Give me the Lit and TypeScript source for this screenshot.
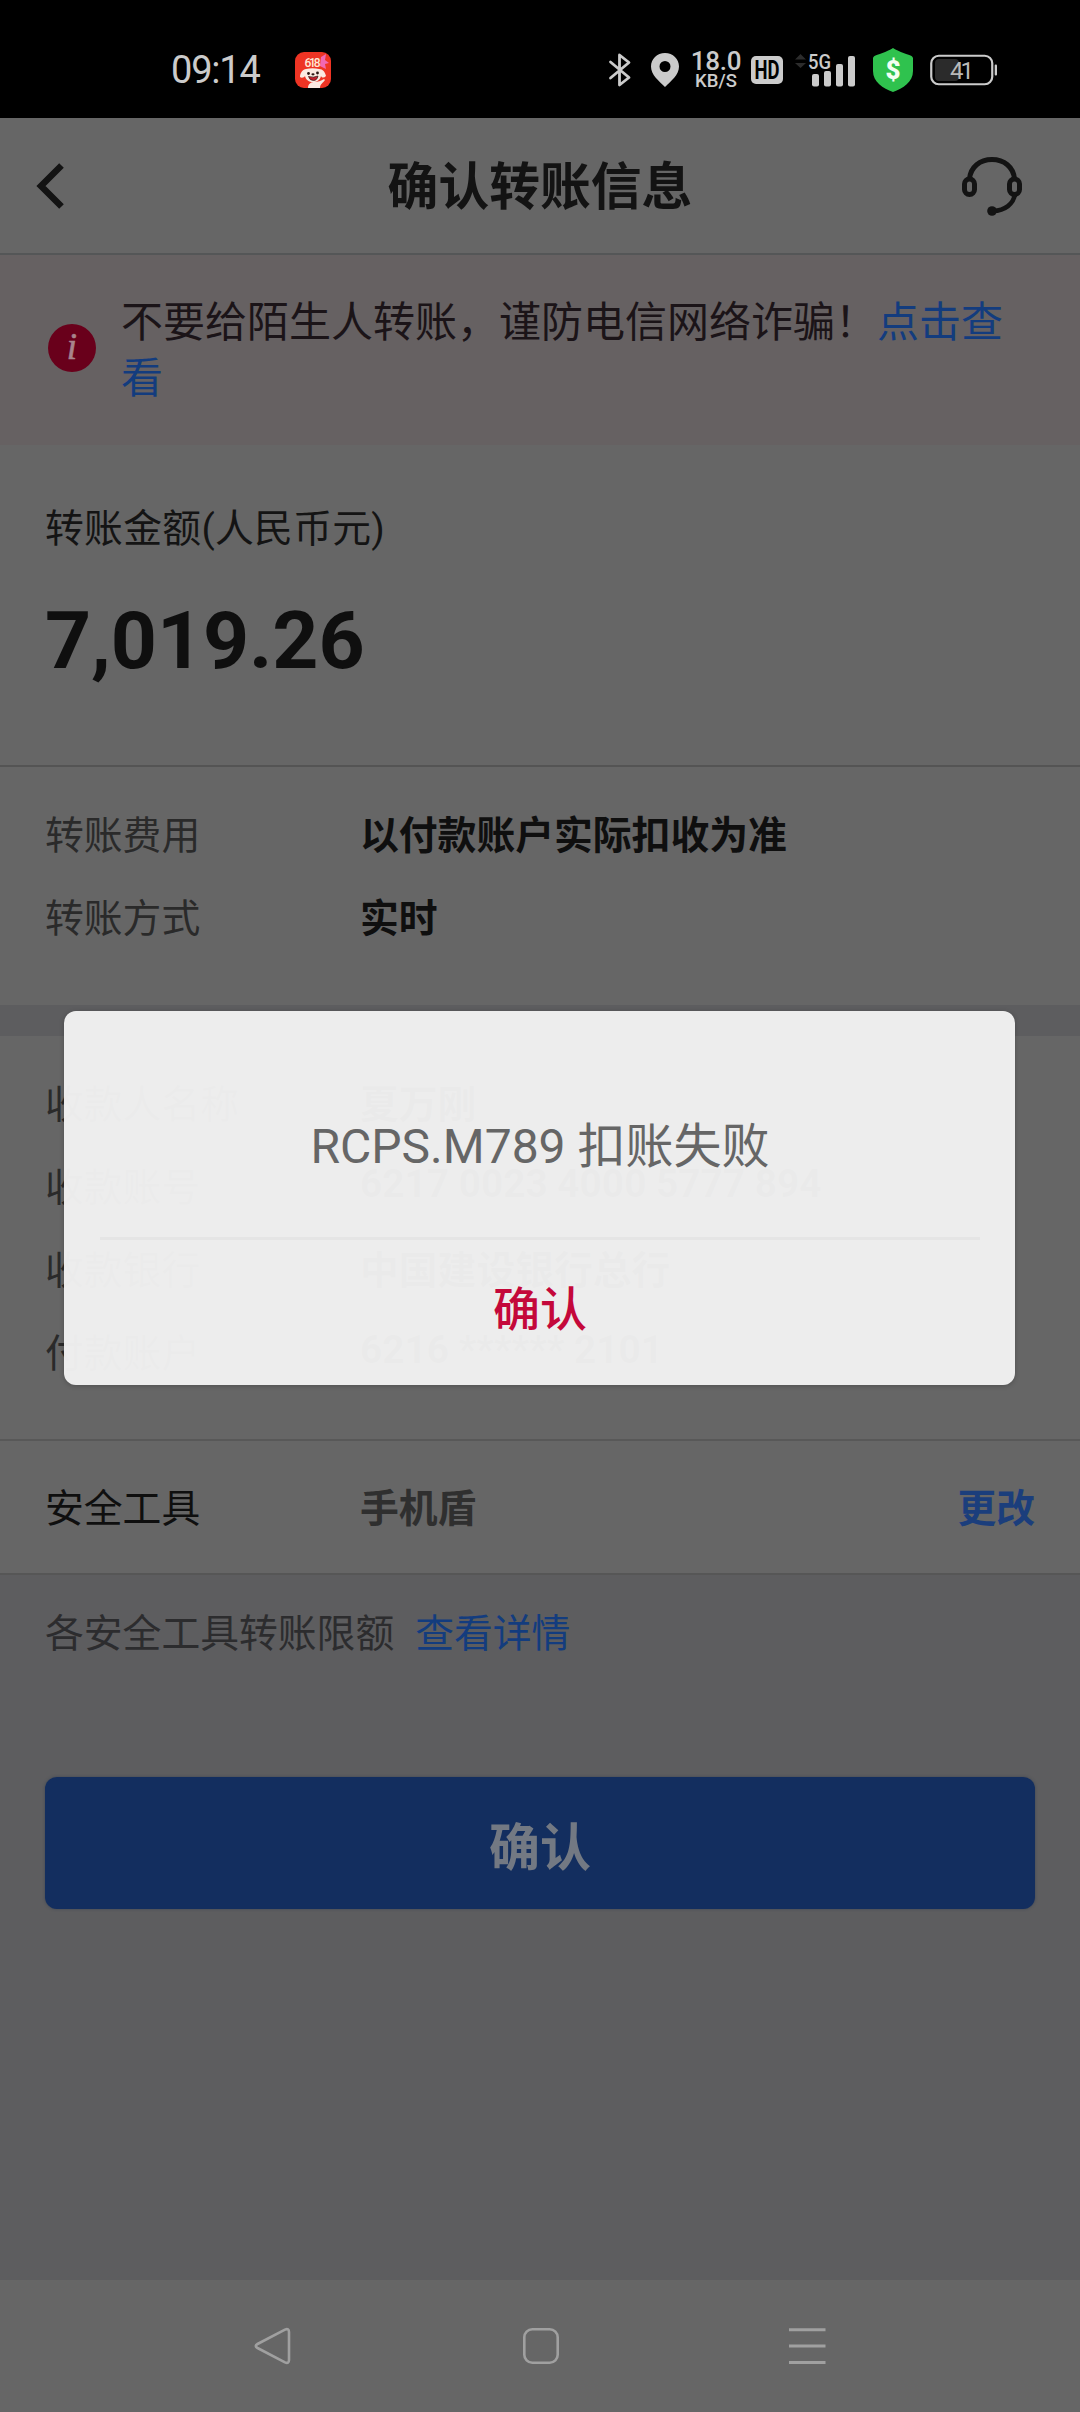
import { LitElement, html, css } from "lit";
import { customElement, property } from "lit/decorators.js";

@customElement("status-bar")
class StatusBar extends LitElement {
  static styles = css`
    :host {
      display: flex;
      align-items: center;
      box-sizing: border-box;
      height: 118px;
      padding: 21px 82px 0 171px;
      background: #000;
      color: #cbcbcb;
      font-family: Roboto, sans-serif;
    }
    svg {
      display: block;
      flex: none;
      overflow: visible;
    }
    .time {
      font-size: 38px;
      line-height: 44px;
      letter-spacing: -1.2px;
      width: 124px;
      white-space: nowrap;
    }
    .icons {
      margin-left: auto;
      display: flex;
      align-items: center;
    }
    .pin {
      margin-left: 20px;
    }
    .speed {
      width: 50px;
      margin-left: 12px;
      display: flex;
      flex-direction: column;
      align-items: center;
      font-weight: 500;
    }
    .num {
      font-size: 26px;
      line-height: 22px;
      letter-spacing: -0.3px;
    }
    .unit {
      font-size: 18.5px;
      line-height: 18px;
    }
    .hd {
      margin-left: 10px;
    }
    .signal {
      margin-left: 11px;
    }
    .shield {
      margin-left: 17px;
    }
    .battery {
      margin-left: 17px;
    }
  `;
  render() {
    return html`
      <span class="time">09:14</span>
      <svg width="36" height="36" viewBox="0 0 36 36">
        <rect width="36" height="36" rx="9" fill="#ee3424" />
        <path d="M26 5l5-3-1 6 4 3-4 1 1 5-6-3z" fill="#f268b4" />
        <text x="17.5" y="15" text-anchor="middle" font-size="12" font-weight="500" fill="#ffe9d8" font-family="Roboto, sans-serif" textLength="16">618</text>
        <path d="M5 25c0-4 3-8 6-8 4-1 9-1 13 0 4 0 6 3 7 7-2 2-4 2-5 0-1 4-4 6-8 6s-7-2-8-6c-1 2-4 2-5 1z" fill="#fbeae2" />
        <path d="M13 36c0-5 4-6 6-6 4 0 7-1 10-3l1 1c-2 3-5 4-5 8z" fill="#fbeae2" />
        <circle cx="13.5" cy="21.5" r="1.4" fill="#2a1512" />
        <circle cx="22.5" cy="21" r="1.4" fill="#2a1512" />
        <ellipse cx="18" cy="22.3" rx="1.6" ry="1.1" fill="#2a1512" />
        <path d="M13.5 24.5q5 1.500 9.500-.5-1 4.500-4.500 4.500-4 0-5-4z" fill="#c51f2c" stroke="#2a1512" stroke-width=".7" />
      </svg>
      <div class="icons">
        <svg width="22" height="34" viewBox="0 0 22 34" fill="none" stroke="#cbcbcb" stroke-width="2.800" stroke-linejoin="round" stroke-linecap="round">
          <path d="M1.500 9L20 24.500 10.500 32V2L20 9.500 1.500 25" />
        </svg>
        <svg class="pin" width="28" height="34" viewBox="0 0 28 34">
          <path fill-rule="evenodd" fill="#cbcbcb" d="M14 0C6 0 0 6 0 13.500 0 22 8 28 14 34c6-6 14-12 14-20.500C28 6 22 0 14 0zm0 8a5.500 5.500 0 1 1 0 11 5.500 5.500 0 0 1 0-11z" />
        </svg>
        <div class="speed"><span class="num">18.0</span><span class="unit">KB/S</span></div>
        <svg class="hd" width="32" height="28" viewBox="0 0 32 28">
          <rect width="32" height="28" rx="5" fill="#cbcbcb" />
          <text x="16" y="23" text-anchor="middle" font-size="25" font-weight="700" fill="#000" font-family="Roboto, sans-serif" textLength="25" lengthAdjust="spacingAndGlyphs">HD</text>
        </svg>
        <svg class="signal" width="62" height="34" viewBox="0 0 62 34" fill="#cbcbcb">
          <path d="M1 6.500L6.500 1 12 6.500zM1 10h11l-5.500 5z" fill="#2c2c2c" />
          <text x="14" y="16" font-size="21" font-weight="500" font-family="Roboto, sans-serif" textLength="23" lengthAdjust="spacingAndGlyphs">5G</text>
          <rect x="18" y="21" width="7" height="12.500" rx="2" />
          <rect x="30" y="18" width="7" height="15.500" rx="2" />
          <rect x="42" y="11" width="7" height="22.500" rx="2" />
          <rect x="54" y="3" width="7" height="30.500" rx="2" />
        </svg>
        <svg class="shield" width="40" height="44" viewBox="0 0 40 44">
          <path d="M20 0c2 2 13 6 17.500 7.500 1.500.5 2.500 1.500 2.500 3V23c0 11-10 17.500-20 21C10 40.500 0 34 0 23V10.500c0-1.500 1-2.500 2.500-3C7 6 18 2 20 0z" fill="#2fc24e" />
          <text x="20" y="31" text-anchor="middle" font-size="26" font-weight="900" fill="#f2fff2" font-family="Roboto, sans-serif">$</text>
        </svg>
        <svg class="battery" width="68" height="32" viewBox="0 0 68 32">
          <rect x="5" y="5" width="24" height="22" rx="4" fill="#2b2b2b" />
          <rect x="1.250" y="1.750" width="61" height="28.500" rx="7.500" fill="none" stroke="#cbcbcb" stroke-width="2.200" />
          <rect x="64.700" y="10.500" width="2.300" height="11" rx="1" fill="#cbcbcb" />
          <text x="32" y="24.500" text-anchor="middle" font-size="24" fill="#b9b9b9" font-family="Roboto, sans-serif" textLength="24">41</text>
        </svg>
      </div>
    `;
  }
}

@customElement("info-row")
class InfoRow extends LitElement {
  @property() label = "";
  @property() value = "";
  static styles = css`
    :host {
      display: grid;
      grid-template-columns: 315px 1fr;
      height: 83px;
      align-items: center;
      font-size: 38.8px;
      white-space: nowrap;
    }
    .label {
      color: #2a2a2a;
    }
    .value {
      font-weight: 700;
      color: #0f0f0f;
    }
  `;
  render() {
    return html`<span class="label">${this.label}</span><span class="value">${this.value}</span>`;
  }
}

@customElement("alert-dialog")
class AlertDialog extends LitElement {
  @property() message = "";
  @property() action = "";
  static styles = css`
    :host {
      box-sizing: border-box;
      display: flex;
      flex-direction: column;
      width: 951px;
      height: 374px;
      padding: 0 35px 0 36px;
      border-radius: 12px;
      background: rgba(243, 243, 243, 0.965);
      box-shadow: 0 1px 5px rgba(0, 0, 0, 0.22);
    }
    .message {
      height: 229px;
      box-sizing: border-box;
      padding-top: 35px;
      display: flex;
      align-items: center;
      justify-content: center;
      border-bottom: 3px solid #e5e5e5;
      font-size: 48px;
      color: #666;
      white-space: pre;
    }
    .action {
      flex: 1;
      padding: 0 6px 15px;
      display: flex;
      align-items: center;
      justify-content: center;
      border: 0;
      background: none;
      font: inherit;
      font-size: 47px;
      font-weight: 500;
      color: #c4083a;
    }
  `;
  render() {
    return html`<div class="message">${this.message}</div>
      <button class="action">${this.action}</button>`;
  }
}

@customElement("app-root")
class AppRoot extends LitElement {
  static styles = css`
    :host {
      display: block;
      font-family: Roboto, "Noto Sans CJK SC", sans-serif;
    }
    .screen {
      position: relative;
      display: flex;
      flex-direction: column;
      width: 1080px;
      height: 2412px;
      overflow: hidden;
      background: #5d5d5f;
      color: #0f0f0f;
      font-size: 38.8px;
    }
    svg {
      display: block;
      flex: none;
    }
    .header {
      box-sizing: border-box;
      height: 137px;
      padding: 0 57px 0 36px;
      display: grid;
      grid-template-columns: 64px 1fr 64px;
      align-items: center;
      background: #666;
      border-bottom: 2px solid #545657;
      color: #131313;
    }
    .header h1 {
      margin: 0;
      padding: 5px 0 0 21px;
      text-align: center;
      font-size: 50.8px;
      font-weight: 700;
      line-height: 60px;
    }
    .header .support {
      margin-left: 2px;
    }
    .notice {
      box-sizing: border-box;
      height: 190px;
      padding: 0 60px 5px 48px;
      display: flex;
      align-items: center;
      gap: 25px;
      background: #666162;
      font-size: 42px;
      line-height: 56px;
      color: #1b1418;
    }
    .notice p {
      margin: 0;
      padding-top: 7px;
      width: 900px;
      word-break: break-all;
    }
    .link {
      color: #133c7e;
    }
    .panel {
      box-sizing: border-box;
      background: #666;
      padding: 0 45px;
    }
    .amount {
      height: 322px;
      padding-top: 56px;
      border-bottom: 2px solid #545454;
      display: flex;
      flex-direction: column;
    }
    .amount .caption {
      line-height: 56px;
      font-size: 38.8px;
      letter-spacing: 0.3px;
      color: #141414;
    }
    .amount .sum {
      margin-top: 33px;
      font-size: 80.5px;
      font-weight: 700;
      line-height: 102px;
      letter-spacing: -0.1px;
    }
    .fees {
      height: 238px;
      padding-top: 23px;
    }
    .payee {
      margin-top: 31px;
      height: 405px;
      padding-top: 23px;
      border-bottom: 2px solid #585858;
    }
    .tool {
      height: 134px;
      padding-bottom: 4px;
      display: grid;
      grid-template-columns: 315px 1fr auto;
      align-items: center;
      border-bottom: 2px solid #565656;
    }
    .tool .value {
      font-weight: 700;
      color: #2f2f2f;
    }
    .tool .change {
      font-weight: 700;
      color: #1b3e7c;
    }
    .limits {
      display: flex;
      gap: 21px;
      padding: 29px 45px 0;
      line-height: 60px;
      color: #2c2c2e;
    }
    .submit {
      margin: 113px 45px 0;
      height: 132px;
      padding: 2px 0 0;
      border: 0;
      border-radius: 12px;
      background: #132e5f;
      box-shadow: 0 0 3px rgba(30, 45, 75, 0.5);
      font: inherit;
      font-size: 51px;
      font-weight: 700;
      color: #737983;
    }
    .nav {
      margin-top: auto;
      height: 132px;
      display: flex;
      align-items: center;
      justify-content: space-between;
      padding: 0 254px;
      background: #666;
    }
    .dialog {
      position: absolute;
      left: 64px;
      top: 1011px;
    }
  `;

  private fees = [
    ["转账费用", "以付款账户实际扣收为准"],
    ["转账方式", "实时"],
  ];
  private payee = [
    ["收款人名称", "夏万刚"],
    ["收款账号", "6217 0023 4000 5777 894"],
    ["收款银行", "中国建设银行总行"],
    ["付款账户", "6216 ****** 2101"],
  ];

  render() {
    const row = ([label, value]: string[]) => html`<info-row label=${label} value=${value}></info-row>`;
    return html`
      <div class="screen">
        <status-bar></status-bar>
        <header class="header">
          <svg width="30" height="48" viewBox="0 0 30 48" fill="none" stroke="currentColor" stroke-width="6.500">
            <path d="M25.500 3.500L5 24l20.500 20.500" />
          </svg>
          <h1>确认转账信息</h1>
          <svg class="support" width="62" height="60" viewBox="0 0 62 60" fill="none" stroke="currentColor" stroke-width="5">
            <path d="M8.500 23C9.500 11 19 3.500 31 3.500S52.500 11 53.500 23" />
            <rect x="3.500" y="23" width="10" height="15.500" rx="5" />
            <rect x="48.500" y="23" width="10" height="15.500" rx="5" />
            <path d="M54 38c-1.500 10-10 16.500-22 17" stroke-width="4.600" />
            <circle cx="31" cy="55" r="4.800" fill="currentColor" stroke="none" />
          </svg>
        </header>
        <div class="notice">
          <svg width="48" height="48" viewBox="0 0 48 48">
            <circle cx="24" cy="24" r="24" fill="#69001b" />
            <text x="24" y="35" text-anchor="middle" font-family="Liberation Serif, serif" font-style="italic" font-size="37" fill="#a8848c" stroke="#a8848c" stroke-width=".6">i</text>
          </svg>
          <p>不要给陌生人转账，谨防电信网络诈骗！<span class="link">点击查看</span></p>
        </div>
        <section class="panel amount">
          <span class="caption">转账金额(人民币元)</span>
          <span class="sum">7,019.26</span>
        </section>
        <section class="panel fees">${this.fees.map(row)}</section>
        <section class="panel payee">${this.payee.map(row)}</section>
        <section class="panel tool">
          <span>安全工具</span>
          <span class="value">手机盾</span>
          <span class="change">更改</span>
        </section>
        <div class="limits"><span>各安全工具转账限额</span><span class="link">查看详情</span></div>
        <button class="submit">确认</button>
        <nav class="nav">
          <svg width="37" height="38" viewBox="0 0 37 38" fill="none" stroke="#a0a0a0" stroke-width="2.600" stroke-linejoin="round">
            <path d="M3.500 17L31 2.600q4-1.600 4 2.400v28q0 4-4 2.400L3.500 21q-3.500-2 0-4z" />
          </svg>
          <svg width="37" height="38" viewBox="0 0 37 38" fill="none" stroke="#a0a0a0" stroke-width="2.600">
            <rect x="2.300" y="2.300" width="33.400" height="33.400" rx="8" />
          </svg>
          <svg width="37" height="38" viewBox="0 0 37 38" fill="none" stroke="#a0a0a0" stroke-width="3">
            <path d="M0 2.800h36.500M0 19h36.500M0 35.400h36.500" />
          </svg>
        </nav>
        <alert-dialog class="dialog" message="RCPS.M789 扣账失败" action="确认"></alert-dialog>
      </div>
    `;
  }
}
